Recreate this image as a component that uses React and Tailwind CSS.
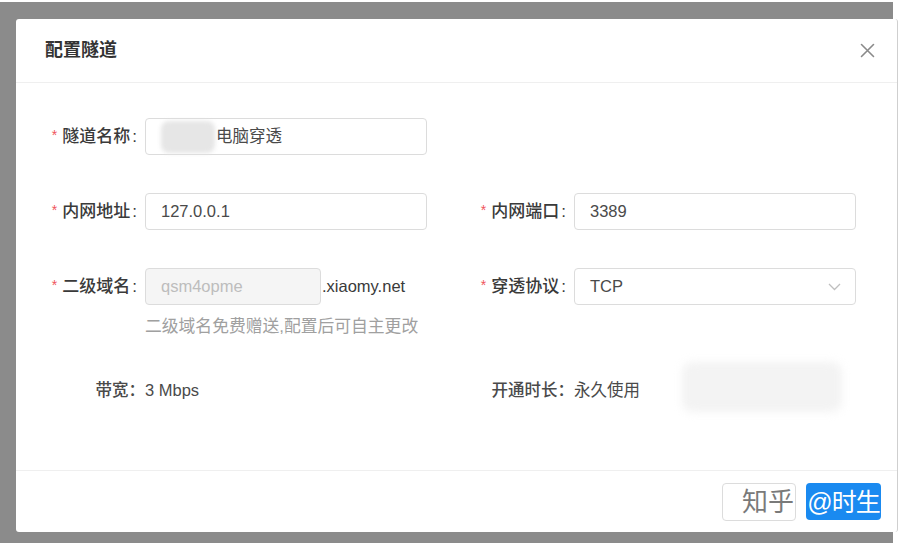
import React from "react";

function Label({ text, required = true, width }) {
  return (
    <div className={`${width} flex justify-end items-center pr-[8px] text-[17px] font-medium text-[#3a3a3a] leading-[20px]`}>
      {required && <span className="text-[#f0545c] mr-[5px] text-[14px] leading-[14px] -mt-[3px]">*</span>}
      <span>{text}</span>
      <span className="ml-[2px]">:</span>
    </div>
  );
}

function Input({ children, className = "" }) {
  return (
    <div className={`h-[37px] border border-[#dcdcdc] rounded-[4px] flex items-center pl-[15px] text-[16.5px] text-[#4a4a4a] ${className}`}>
      {children}
    </div>
  );
}

export default function App() {
  return (
    <div className="w-[903px] h-[543px] bg-white overflow-hidden font-['Liberation_Sans','Noto_Sans_CJK_SC',sans-serif]">
      <div className="w-[893px] h-[541px] mt-[2px] bg-[#8b8b8b] pl-[16px] pt-[17px]">
        <div className="w-[882px] h-[513px] bg-white rounded-[3px] border-r border-[#cfcfcf] flex flex-col">
          {/* header */}
          <div className="h-[64px] border-b border-[#efefef] flex items-center justify-between pl-[29px] pr-[22px]">
            <span className="text-[18px] font-bold text-[#333] leading-[24px] -mt-[1px]">配置隧道</span>
            <svg width="15" height="15" viewBox="0 0 15 15" className="-mt-[1px]">
              <path d="M1.5 1.5 L13.5 13.5 M13.5 1.5 L1.5 13.5" stroke="#8a8a8a" strokeWidth="1.6" strokeLinecap="round" />
            </svg>
          </div>
          {/* body */}
          <div className="h-[387px] flex flex-col pt-[35px]">
            <div className="flex items-center">
              <Label text="隧道名称" width="w-[129px]" />
              <Input className="w-[282px] pl-[9px]">
                <div className="w-[54px] h-[32px] bg-[#e6e6e6] rounded-[8px] blur-[2px] mr-[1px]" />
                <span>电脑穿透</span>
              </Input>
            </div>
            <div className="flex items-center mt-[38px]">
              <Label text="内网地址" width="w-[129px]" />
              <Input className="w-[282px]">127.0.0.1</Input>
              <Label text="内网端口" width="w-[147px]" />
              <Input className="w-[282px]">3389</Input>
            </div>
            <div className="flex items-center mt-[38px]">
              <Label text="二级域名" width="w-[129px]" />
              <div className="w-[282px] flex items-center">
                <Input className="w-[176px] bg-[#f5f5f5] text-[#bdbdbd]">qsm4opme</Input>
                <span className="text-[16.5px] text-[#3a3a3a] ml-[1px]">.xiaomy.net</span>
              </div>
              <Label text="穿透协议" width="w-[147px]" />
              <Input className="w-[282px] justify-between pr-[14px]">
                <span>TCP</span>
                <svg width="13" height="8" viewBox="0 0 13 8">
                  <path d="M1 1 L6.5 6.5 L12 1" fill="none" stroke="#bfbfbf" strokeWidth="1.3" />
                </svg>
              </Input>
            </div>
            <div className="flex mt-[13px]">
              <div className="w-[129px]" />
              <span className="text-[16.8px] text-[#a0a0a0] leading-[18px]">二级域名免费赠送,配置后可自主更改</span>
            </div>
            <div className="flex items-center mt-[42px] h-[24px] text-[16.5px] text-[#4a4a4a]">
              <div className="w-[129px] flex justify-end font-medium">
                <span>带宽：</span>
              </div>
              <span className="w-[282px]">3 Mbps</span>
              <div className="w-[147px] flex justify-end font-medium">
                <span>开通时长：</span>
              </div>
              <span>永久使用</span>
              <div className="ml-[42px] w-[160px] h-[50px] bg-[#f3f3f3] rounded-[10px] blur-[4px] -mt-[6px]" />
            </div>
          </div>
          {/* footer */}
          <div className="flex-1 border-t border-[#efefef] flex justify-end items-start pt-[12px] pr-[16px] gap-[10px]">
            <div className="w-[74px] h-[38px] border border-[#dcdcdc] rounded-[4px] bg-white flex items-center justify-end pr-[1px] text-[26px] leading-[30px] text-[#7a7a7a] whitespace-nowrap">
              知乎
            </div>
            <div className="w-[75px] h-[37px] bg-[#1a8af0] rounded-[4px] flex items-center justify-center text-[25px] leading-[30px] text-white whitespace-nowrap tracking-[-1px]">
              @时生
            </div>
          </div>
        </div>
      </div>
    </div>
  );
}
